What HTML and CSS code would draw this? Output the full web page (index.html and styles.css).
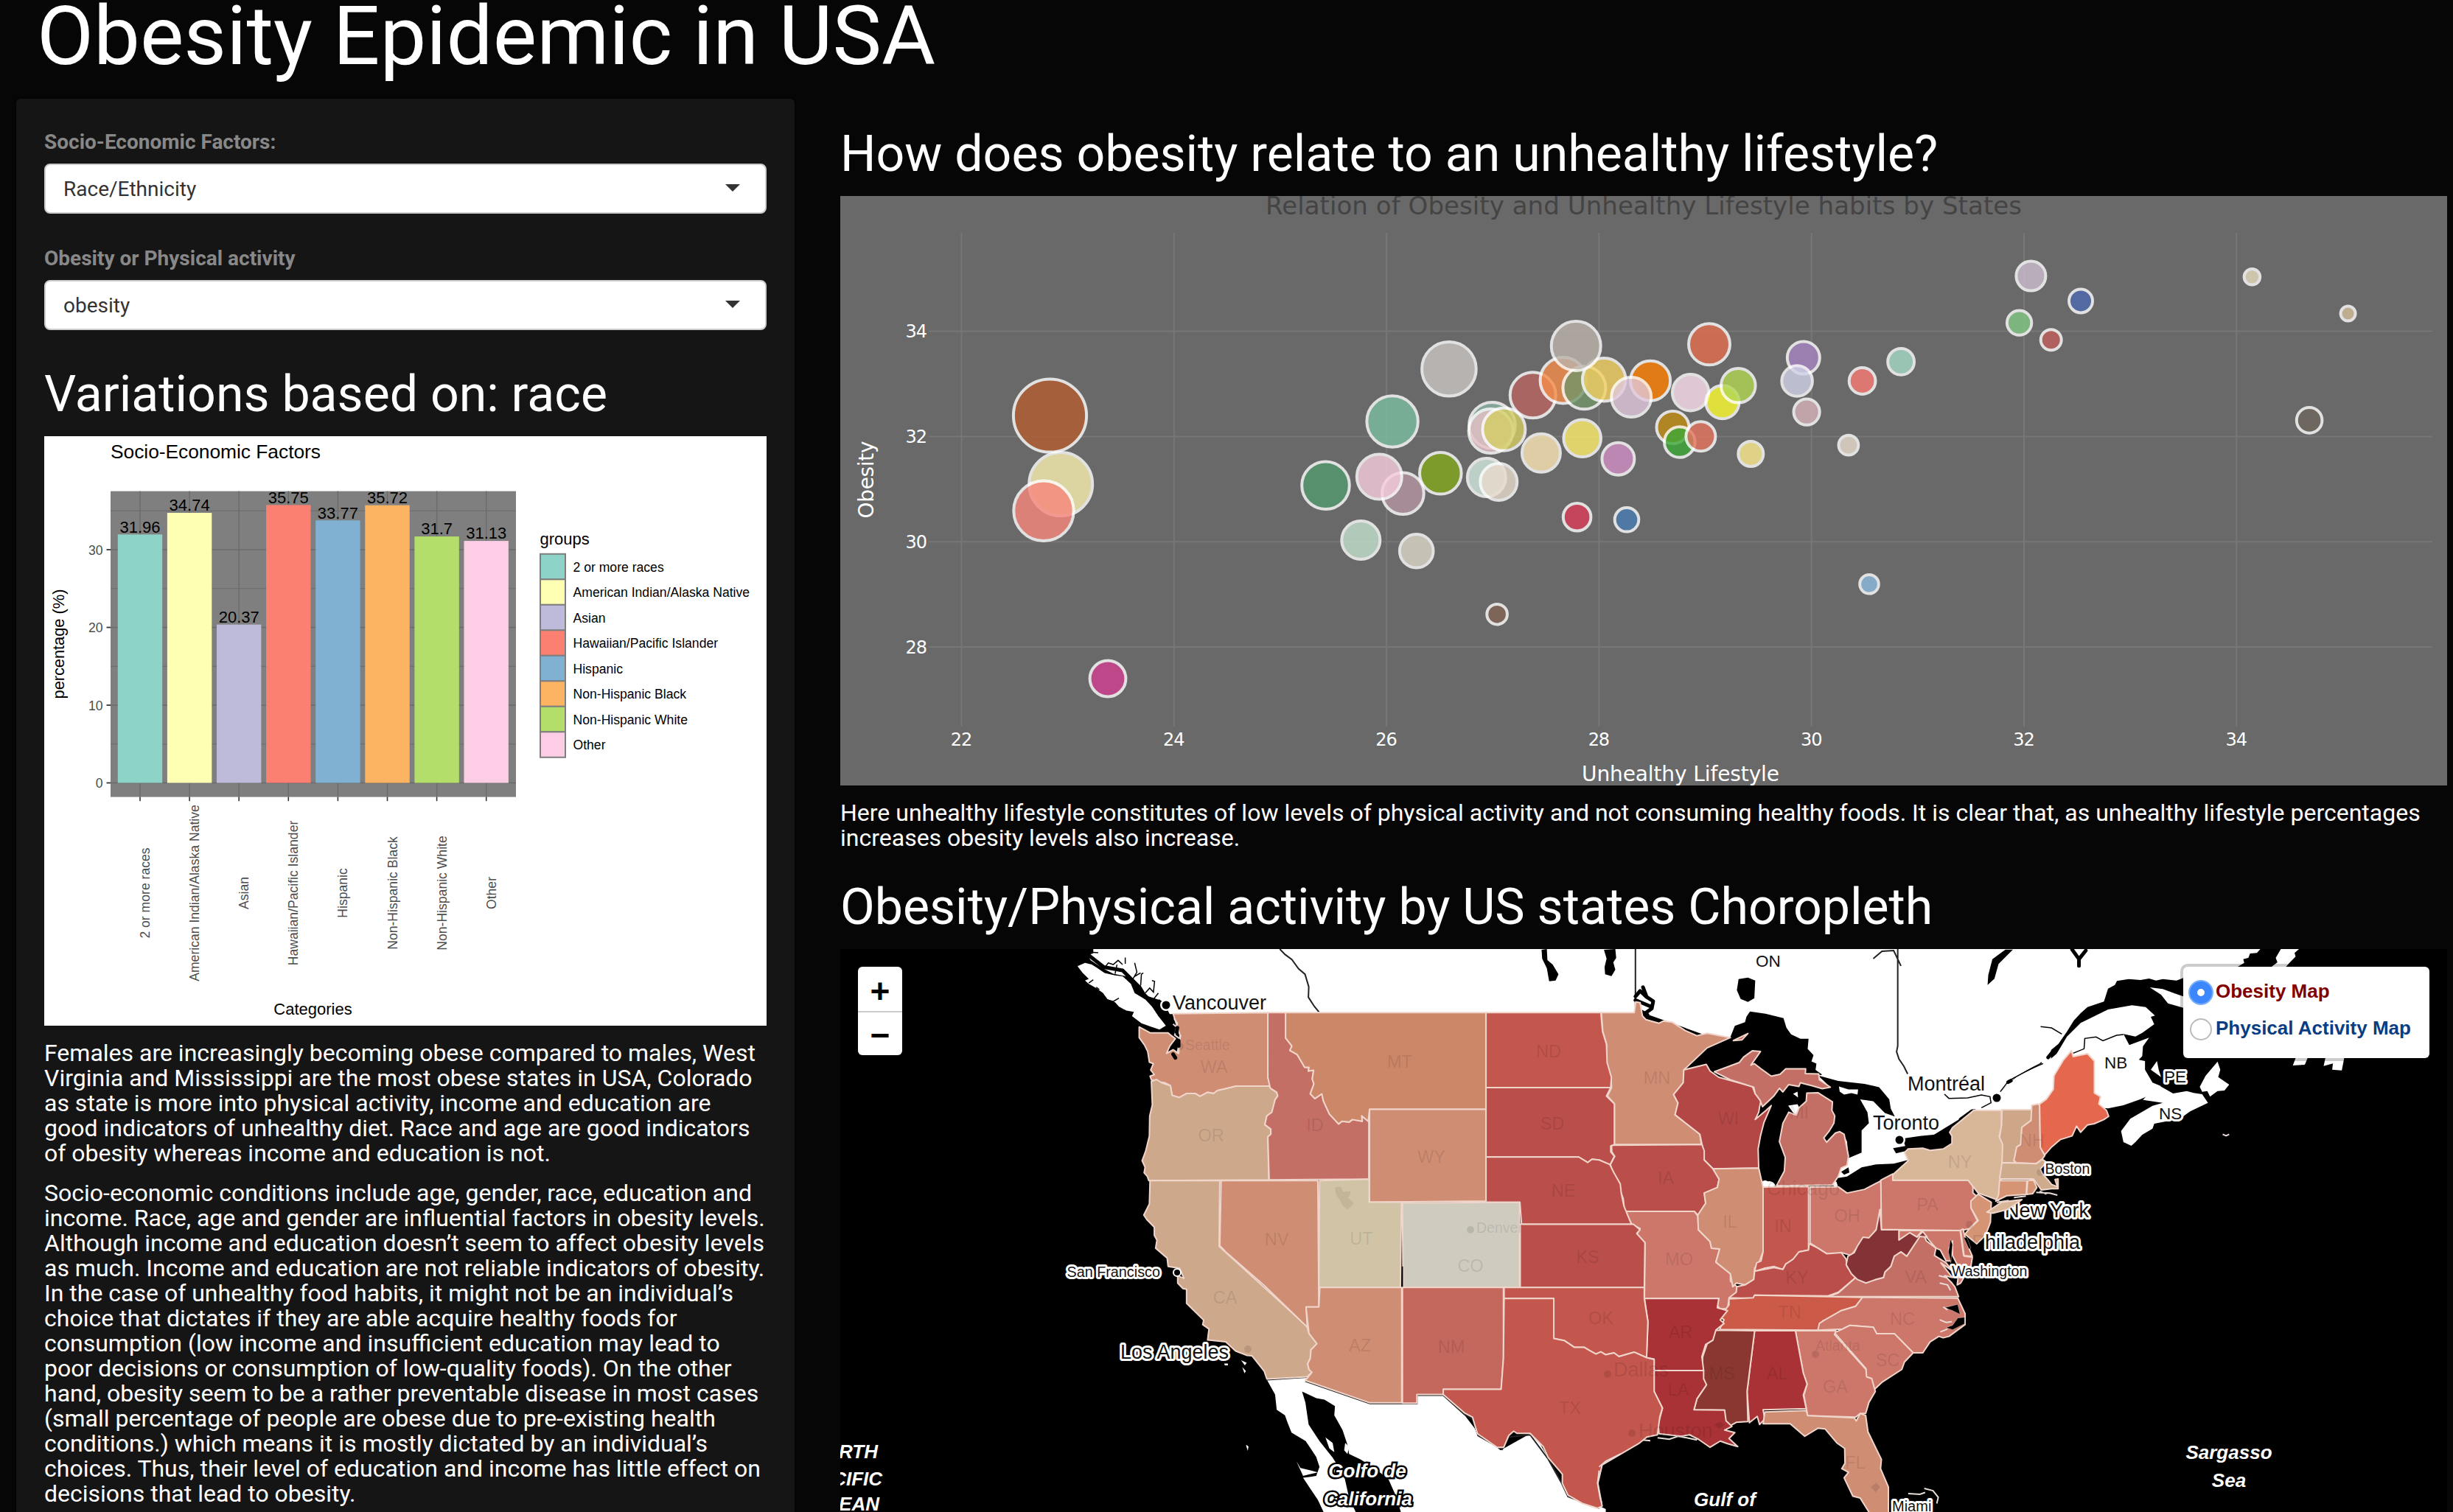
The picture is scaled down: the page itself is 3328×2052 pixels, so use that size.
FILE: index.html
```html
<!DOCTYPE html>
<html lang="en">
<head>
<meta charset="utf-8">
<title>Obesity Epidemic in USA</title>
<link rel="stylesheet" href="styles.css">
</head>
<body>
<h1 class="page-title">Obesity Epidemic in USA</h1>
<div class="layout">
  <aside class="sidebar">
    <div class="field">
      <label class="field-label">Socio-Economic Factors:</label>
      <div class="select"><span>Race/Ethnicity</span><i class="caret"></i></div>
    </div>
    <div class="field">
      <label class="field-label">Obesity or Physical activity</label>
      <div class="select"><span>obesity</span><i class="caret"></i></div>
    </div>
    <h3 class="heading">Variations based on: race</h3>
    <svg class="bar-chart" id="bars" viewBox="0 0 980 800"></svg>
    <p class="copy first">Females are increasingly becoming obese compared to males, West Virginia and Mississippi are the most obese states in USA, Colorado as state is more into physical activity, income and education are good indicators of unhealthy diet. Race and age are good indicators of obesity whereas income and education is not.</p>
    <p class="copy">Socio-economic conditions include age, gender, race, education and income. Race, age and gender are influential factors in obesity levels. Although income and education doesn’t seem to affect obesity levels as much. Income and education are not reliable indicators of obesity. In the case of unhealthy food habits, it might not be an individual’s choice that dictates if they are able acquire healthy foods for consumption (low income and insufficient education may lead to poor decisions or consumption of low-quality foods). On the other hand, obesity seem to be a rather preventable disease in most cases (small percentage of people are obese due to pre-existing health conditions.) which means it is mostly dictated by an individual’s choices. Thus, their level of education and income has little effect on decisions that lead to obesity.</p>
  </aside>
  <main class="main">
    <h3 class="heading">How does obesity relate to an unhealthy lifestyle?</h3>
    <svg class="scatter" id="scatter" viewBox="0 0 2180 800"></svg>
    <p class="copy wide">Here unhealthy lifestyle constitutes of low levels of physical activity and not consuming healthy foods. It is clear that, as unhealthy lifestyle percentages increases obesity levels also increase.</p>
    <h3 class="heading second">Obesity/Physical activity by US states Choropleth</h3>
    <div class="map">
      <svg class="map-canvas" id="map" viewBox="0 0 2180 800">
        <!-- Pacific side: Canada, Vancouver Island -->
        <g transform="matrix(.5102 0 0 .56888 -20 -128)">
          <path class="land" d="M712,225H1700V380H915L905,362 888,345 872,350 850,330 838,312 815,300 800,290 765,284 740,272 722,262 705,252 697,240 712,235Z"/>
          <path class="land" d="M670,266L690,258 708,262 722,270 742,282 770,288 790,290 812,308 822,330 850,345 868,362 885,385 905,408 888,417 862,409 840,402 815,385 820,375 800,372 780,362 770,352 750,345 738,330 720,318 700,308 690,300 700,296 684,282Z"/>
          <path class="inlet" d="M700,232L725,234M740,272L752,258 765,262 778,252 790,262M770,284L775,262M815,300L828,280 822,258M822,290L838,282M838,312L840,285 845,282M850,330L862,318 872,328 875,302 868,300M872,345L885,330M797,260V245M745,345L765,350 780,342M720,316L728,322M760,355L790,372M700,306L712,298"/>
          <path class="inlet wide" d="M700,240L740,268 790,276 830,312 850,340 890,352"/>
          <path class="inlet wide" d="M880,352L905,385 920,400 930,415"/>
          <path class="land" d="M1118,1408L1124,1412 1122,1420ZM1105,1206L1120,1212 1115,1218ZM1108,1222L1118,1232 1114,1237ZM1060,1214H1070V1218H1062Z"/>
          <path class="line" d="M1208,225L1222,238 1240,250 1258,272 1275,285 1285,315 1284,340 1300,362 1312,375M1492,225V380"/>
        </g>
        <!-- Mexico and western Canada borders -->
        <g transform="matrix(.44643 0 0 .49872 360 -18)">
          <path class="land" d="M490,1208L612,1198 803,1270 946,1270 946,1248 1040,1245 1130,1350 1200,1400 1300,1350 1400,1510 1520,1560V1640H700L645,1535 600,1475 640,1470 650,1445 640,1418 608,1375 565,1352 553,1325 545,1305 520,1290 515,1248Z"/>
          <path fill="#000" d="M597,1240L640,1258 665,1262 697,1280 695,1305 720,1345 735,1385 740,1410 775,1425 820,1450 860,1480 885,1530 920,1640H800L760,1568 740,1530 725,1470 690,1420 650,1375 617,1330 607,1270Z"/>
          <path class="land" d="M668,1365L690,1380 695,1405 680,1395ZM728,1380L740,1390 735,1410 725,1400ZM580,1430L592,1448 645,1460 600,1470ZM428,1385L434,1390 432,1402Z"/>
          <path class="line" d="M490,1208L612,1201M607,1212L803,1273H946V1250H1026M1026,1250L1090,1302 1115,1316 1132,1360 1205,1398 1225,1364 1290,1358 1345,1424 1386,1490 1405,1526 1500,1558"/>
          <path class="line" d="M853,36V209M1282,36L1294,209"/>
        </g>
        <!-- Eastern Canada and the Great Lakes -->
        <g transform="matrix(.39541 0 0 .49872 1010 -18)">
          <path class="land" d="M-700,36H1600V475H1335L1160,560 1108,612 1000,640 870,670 850,640 800,380 198,209H-700Z"/>
          <path class="line" d="M174,36V209M1074,36V300L1070,315 1078,335 1095,355 1108,376M1235,430L1245,443 1290,445 1330,434 1370,436 1395,450 1360,470M1568,345L1530,362 1490,380 1455,398 1430,420 1420,438M990,62L1020,42 1060,40 1085,82"/>
          <path fill="#000" d="M66,38L105,36 108,60 98,72 105,92 92,110 70,105 68,85 75,62ZM-148,38L-130,36-128,66-110,78-90,105-100,122-122,124-130,88-146,62ZM528,118L560,114 585,122 582,170 560,180 535,172 522,148ZM1398,68L1440,36 1468,44 1400,100 1400,124 1376,134 1388,112 1386,86Z"/>
          <path class="inlet wide" d="M174,165L190,150 210,165 235,178 230,198 205,212M200,140L212,165M174,175L225,192M180,200L215,215"/>
          <path fill="#000" d="M350,365L420,305 500,275 515,245 550,235 555,220 567,206 620,212 682,224 692,250 708,268 740,280 768,280 765,308 785,325 778,342 795,348 792,365 815,378 757,385 758,362 690,362 665,378 640,382 600,360 570,350 600,315 560,320 530,345 460,370 420,350Z"/>
          <path fill="#000" d="M800,380L870,395 960,403 1010,412 1045,445 1050,470 1064,492 1030,482 1005,462 990,450 945,445 970,480 975,510 950,530 950,590 905,605 900,560 885,537 860,535 830,562 820,545 850,500 850,452 800,427 765,415 843,412Z"/>
          <path class="land" d="M872,410L905,418 938,418 936,432 915,428 890,432 875,424Z"/>
          <path fill="#000" d="M593,580L605,520 622,500 640,465 585,502 605,462 630,440 650,432 680,418 770,408 765,440 750,455 725,485 680,510 668,560 688,603 685,640 658,680 612,686 597,655Z"/>
          <path class="land" d="M698,462L730,458 738,470 725,490 712,478ZM715,430L730,424 732,440ZM600,675A22,20 0 0 1 628,668 26,22 0 0 1 655,680L640,684H605ZM850,678L860,668 878,672 884,690 860,684Z"/>
          <path fill="#000" d="M860,660L900,655 950,630 1000,622 1060,620 1110,610 1057,652 1016,667 960,692 900,702 870,685ZM880,642L905,630 908,644 890,650Z"/>
          <path fill="#000" d="M1058,578L1100,572 1090,552 1150,545 1215,540 1240,522 1275,518 1335,473 1265,525 1262,570 1230,582 1160,584 1100,586 1068,592Z"/>
          <path class="inlet wide" d="M1335,474L1290,500"/>
          <!-- states -->
          <g class="states">
            <path fill="#cf8d74" d="M57,209L170,209 175,180 190,182 198,218 210,228 255,238 270,232 300,235 345,258 385,272 420,265 500,277 420,305 340,365 338,400 305,432 320,455 310,487 395,540 400,568 102,568V457L78,436 92,413 90,385 75,345V295L62,260Z"/>
            <path fill="#b34746" d="M340,365L417,350 430,368 460,385 575,410 585,430 607,440 600,466 597,480 585,500 622,475 640,462 615,508 603,545 595,580 597,632 440,634 410,610 407,585 395,540 310,487 320,455 305,432 338,400Z"/>
            <path fill="#c46f66" d="M445,370L530,345 545,330 575,313 603,315 570,352 582,348 605,362 640,382 670,377 690,362 758,362 757,375 803,376 805,392 843,412 815,416 780,408 740,400 735,410 700,405 680,425 668,415 650,435 630,450 610,465 602,448 585,430 580,412 500,392ZM510,285L560,266 540,283Z"/>
            <path fill="#c46f66" d="M658,680L685,640 688,603 668,560 680,510 700,480 725,488 735,468 760,450 762,428 800,427 850,452 848,475 858,490 855,510 840,530 820,550 830,562 860,537 875,533 890,540 905,600 900,625 880,632 870,655 850,678Z"/>
            <path fill="#b94e4a" d="M92,570L402,568 410,585 410,610 440,634 461,662 455,685 410,700 415,728 388,760 376,750H137L132,715 125,700 120,675 95,640 88,622 103,600 93,588Z"/>
            <path fill="#cd776b" d="M137,750H376L388,762 390,800 430,832 435,850 463,852 450,888 500,920 500,940 522,955 520,970 495,988 490,1015 463,1015 455,1005 460,987H205L207,835 178,813 190,797 160,783Z"/>
            <path fill="#cf8d74" d="M440,634L597,632 612,684V860L600,885 583,905 580,935 550,950 520,945 508,955 500,920 450,888 463,852 435,850 430,832 390,800 388,760 415,728 410,700 455,685 461,662Z"/>
            <path fill="#c3564d" d="M612,684L768,682V855L735,860 732,878 715,880 700,898 690,893 680,908 650,900 615,905 583,913 590,890 605,885 612,860Z"/>
            <path fill="#cd776b" d="M773,684L850,683 870,683 900,700 960,690 1016,667 1018,745 1010,778 1000,800 970,830 955,822 940,850 930,853 915,870 880,862 870,866 830,865 800,850 773,836Z"/>
            <path fill="#cd776b" d="M1016,665L1057,648V665H1315L1332,680V700L1350,712 1325,740 1347,775 1320,797 1290,802 1018,799Z"/>
            <path fill="#d7b797" d="M1057,650L1110,612 1097,590 1110,580 1160,578 1185,584 1230,580 1260,565V545L1252,535 1262,522 1335,475H1430V520L1422,545 1437,572 1432,640 1420,720 1393,712 1350,700 1315,665H1057Z"/>
            <path fill="#d59474" d="M1350,703L1395,725 1392,780 1375,815 1345,838 1305,812 1320,797 1350,775 1325,740 1325,722Z"/>
            <path fill="#b94e4a" d="M495,985L520,970 522,955 550,950 580,935 583,913 650,903 680,908 690,893 715,880 735,860 768,855 770,838 800,850 830,865 880,862 897,880 900,900 930,930 870,970 835,980 583,978 578,987Z"/>
            <path fill="#cd776b" d="M1078,802H1290L1302,872 1330,875 1325,900 1300,910 1285,905 1275,890 1262,870 1262,830 1250,850 1255,885 1240,885 1220,855 1205,850 1172,820 1155,805 1140,820 1115,810 1078,828ZM1288,802L1298,798 1310,835 1330,872 1300,870ZM1285,905L1322,902 1290,945 1278,950Z"/>
            <path fill="#c46f66" d="M835,982L870,972 930,930 965,942 1000,935 1025,930 1030,915 1050,900 1062,870 1085,860 1105,870 1130,840 1140,820 1160,808 1172,830 1205,850 1200,870 1240,890 1262,912 1222,890 1262,930 1235,925 1260,945 1270,955 1283,982Z"/>
            <path fill="#833235" d="M1013,745L1018,800H1078V828L1115,808 1140,820 1160,805 1175,820 1150,818 1130,842 1105,872 1085,860 1062,872 1050,900 1030,915 1025,930 1000,935 965,945 935,935 915,920 897,895 903,872 925,862 935,845 955,820 975,822 1000,800Z"/>
            <path fill="#cc5a48" d="M495,988L578,985 583,978 835,982 953,984 930,1008 880,1020 830,1045 818,1047 800,1073 463,1071 478,1045 465,1038 485,1015 495,1005Z"/>
            <path fill="#cd776b" d="M953,984L1280,986 1305,1028V1058L1250,1090 1230,1094 1215,1090 1185,1105 1160,1135H1127L1063,1083H1002L990,1065 910,1060 885,1070 800,1073 805,1055 820,1047 880,1020 930,1008Z"/>
            <path fill="#cd776b" d="M857,1080L885,1070 910,1060 990,1065 1002,1083H1063L1127,1135 1097,1160 1088,1180 1020,1215 993,1235 983,1205 965,1200 965,1178Z"/>
            <path fill="#cd776b" d="M723,1075H862L857,1085 965,1180 967,1200 985,1205 997,1240 975,1270 964,1300 945,1300 930,1310 765,1306 752,1250 763,1220 750,1190Z"/>
            <path fill="#a83236" d="M583,1075H723L750,1190 763,1220 750,1250 760,1287 612,1290 618,1315 600,1330 592,1308 565,1325 557,1240Z"/>
            <path fill="#8a3731" d="M450,1073L583,1075 557,1240 560,1322 520,1324 495,1335 482,1320 480,1291 375,1290 385,1260 415,1225 400,1195 405,1145 420,1110 440,1100 440,1080Z"/>
            <path fill="#a83236" d="M205,987H460L455,1012 490,1020 465,1045 478,1055 450,1073 440,1100 415,1112 402,1145 408,1183H238V1152L212,1148 217,1050Z"/>
            <path fill="#a83236" d="M238,1183H408V1205L418,1222 385,1260 375,1290 480,1291 485,1320 505,1335 480,1345 515,1352 495,1368 525,1390 490,1382 465,1375 430,1392 390,1370 360,1358 330,1362 255,1355 252,1330 267,1285 238,1240Z"/>
            <path fill="#cf8d74" d="M618,1296L760,1292 765,1306 925,1312 932,1320 945,1300 964,1305 972,1350 1018,1425 1015,1450 1042,1500V1568L1035,1640 975,1568 945,1530 920,1525 890,1475 905,1460 882,1450 893,1435 892,1395 865,1380 825,1342 800,1340 755,1362 705,1328H612Z"/>
          </g>
          <path fill="#000" stroke="#eccfc9" stroke-width="1" d="M1235,1012L1280,1003 1288,1030 1262,1020ZM1240,1066L1262,1060 1280,1040 1303,1038V1056L1262,1072ZM1255,825L1262,840 1256,890 1248,860ZM1300,820L1312,822 1325,850 1318,852Z"/>
          <path class="halo-line" d="M1218,1045L1240,1052 1260,1050M1220,1078L1245,1070M1230,1010L1245,1018M1218,945L1245,950 1255,965M1215,925L1240,930"/>
          <path class="halo-line" d="M1110,1518L1150,1520 1168,1515M1165,1504L1195,1510 1213,1528 1208,1545"/>
          <path class="halo-line" d="M190,1360L200,1372 225,1374M250,1366L290,1370 320,1362 350,1366 385,1372"/>
          <path fill="#0000001a" d="M445,1330L465,1322 480,1332 460,1342ZM982,1500L1000,1488 1013,1500 998,1515Z"/>
        </g>
        <!-- New England, Maritimes -->
        <g transform="matrix(.46429 0 0 .33333 1460 -18)">
          <path class="land" d="M0,54H1005L995,70 975,72 970,90 955,95 958,110 940,125 780,172 760,182 720,176 700,182 680,174 655,180 620,176 586,184 580,200 560,215 548,268 500,290 480,315 460,345 440,390 415,440 385,475 360,520 300,560 250,630 200,706H0Z"/>
          <path class="land" d="M150,706L250,630 300,565 370,528 410,480 440,410 480,355 560,300 630,283 670,290 697,325 685,330 695,360 660,395 640,410 605,400 622,445 680,415 662,450 660,490 650,505 668,510 668,545 690,598 715,612 680,650 655,665 605,690 560,703 535,700 530,708Z"/>
          <path class="land" d="M662,668L690,625 712,612 735,630 750,642 790,632 810,640 835,645 852,680 800,715 770,745 695,765 690,785 660,810 640,840 628,855 605,840 598,795 625,745 690,692 720,680ZM880,512L888,545 882,575 914,606 900,630 880,632 858,655 850,632 835,635 828,615 845,570ZM703,510L708,545 715,575 700,560 685,545ZM682,210L720,217 755,235 780,247V293L735,275 715,240ZM1065,54H1118L1105,70 1108,85 1090,110 1080,126H1038L1055,108 1050,90ZM1108,498H1143L1135,525 1100,528ZM1195,498H1250L1247,520 1243,548 1215,545 1217,520 1190,530Z"/>
          <path class="inlet" d="M363,370L395,375 425,400M458,478L490,460 492,418 525,412 545,427 585,405 605,402M82,645L95,662 150,660 190,648 215,655 218,680 190,700M245,635L270,590 330,545 370,520"/>
          <path class="inlet wide" d="M268,596L276,590M385,495L400,470M455,56L475,95 495,60M475,90V122"/>
          <path fill="#000" d="M210,160L222,95 260,56H282L240,115 228,175 208,200Z"/>
          <g class="states">
            <path fill="#cea688" d="M250,708H337L335,752 308,780 305,850 293,860 292,900 285,915 292,924H250L252,850 243,820 249,770Z"/>
            <path fill="#cf8d74" d="M337,690L355,685 360,690 362,860 375,895 367,910 350,928 292,924 285,915 293,860 305,850 308,780 335,752Z"/>
            <path fill="#e4674e" d="M453,468L458,492 500,480 520,510V640L538,655 533,685 555,710 562,735 548,748 520,765 500,770 480,800 468,775 455,815 420,830 395,860 375,892 362,862 360,685 380,665 400,625 402,570 430,505Z"/>
            <path fill="#ceab8d" d="M250,924L350,928 368,910 380,922 362,950 368,968 385,995 395,1012 412,1022 405,992 414,990V1030L395,1030 365,1035 342,990H243Z"/>
            <path fill="#d59474" d="M243,997H323L321,1053 265,1058 232,1080 240,1055Z"/>
            <path fill="#d59474" d="M325,997L342,995 352,1025 340,1050 322,1053Z"/>
          </g>
          <path class="halo-line" d="M350,1045L390,1048 412,1056M235,1085L270,1078M285,1066L320,1060M360,1040L380,1052M895,808L905,814 914,808"/>
        </g>
        <!-- Western and central states -->
        <g class="states" transform="matrix(.44643 0 0 .49872 360 -18)">
          <path fill="#cf8d74" d="M102,248L135,264H190L200,272 212,280 195,300 185,320 205,310 222,320 226,270 215,240 205,212 493,209V385L500,409H397L365,416 340,421 328,429 310,426 287,437 272,429H247L224,440 202,434 197,408 180,400 160,397 139,392 135,382 148,378 137,365 145,348 133,344 128,315 118,297 102,277Z"/>
          <path fill="#cea88a" d="M139,396L155,391 170,400 197,408 202,434 224,440 247,429H272L287,437 310,426 328,429 340,421 365,416 397,409H498L505,418 520,426 523,436 515,446 505,485 490,490 484,514 502,526V540L493,547 496,664 131,666 127,655 117,645 120,630 111,612 122,585 133,545 134,490 142,460Z"/>
          <path fill="#cea88a" d="M135,666H347L345,845 612,1063 618,1082 642,1110 624,1127 622,1150 614,1165 618,1180 627,1188 612,1200 490,1206 482,1185 445,1143 430,1142 395,1130 365,1105 310,1100 314,1070 295,1058 298,1046 246,1000V962L235,960 219,945 219,925 238,932 225,905 190,900 187,877 152,850 156,828 148,815V793L125,772 116,760 133,730Z"/>
          <path fill="#cf8d74" d="M351,666H645L648,1010H609L613,1065 480,950 365,860 347,843Z"/>
          <path fill="#c46f66" d="M493,209H547V278L566,300 560,312 582,323 605,358H618L616,368 632,366 628,390 633,403 622,430 636,443 657,430 662,450 680,485 708,512 718,505 740,507 750,500 780,505 778,490 800,505V662L497,664 493,547 502,540V526L484,514 490,490 505,480 515,446 523,436 520,426 500,414 493,385Z"/>
          <path fill="#cc8668" d="M547,209H1156V472H802L798,505 778,490 780,505 750,500 740,507 718,505 708,512 680,485 662,450 657,430 636,443 622,430 633,403 628,390 632,366 616,368 618,358H605L582,323 560,312 566,300 547,278Z"/>
          <path fill="#cf8d74" d="M802,472H1156V722L802,725Z"/>
          <path fill="#d1c4a6" d="M650,666L801,662V725H899L896,957H648Z"/>
          <path fill="#cfcbbf" d="M902,727L1258,725V957H904Z"/>
          <path fill="#cf8d74" d="M651,957H900V1271H803L607,1210 627,1188 618,1180 614,1165 622,1150 624,1127 642,1110 618,1082 609,1010H648Z"/>
          <path fill="#c4675c" d="M902,957H1209V1150L1202,1234H1026V1248H946V1272H902Z"/>
          <path fill="#c3564d" d="M1156,209H1505L1510,260 1522,295 1524,345 1537,385 1535,413H1156Z"/>
          <path fill="#b94e4a" d="M1156,413H1535L1522,436 1546,457V568L1535,572V588L1546,600 1532,625 1500,610 1478,608 1465,617 1438,602H1156Z"/>
          <path fill="#b94e4a" d="M1156,602H1438L1465,617 1478,608 1500,610 1532,622 1545,645 1564,675 1567,700 1575,735 1598,785H1264L1259,725H1156Z"/>
          <path fill="#b94e4a" d="M1260,785H1604L1624,800 1614,810 1639,835 1637,958H1260Z"/>
          <path fill="#c3564d" d="M1211,957H1637V987L1648,1050 1644,1148 1607,1133 1560,1145 1545,1135 1520,1140 1505,1132 1490,1138 1470,1128 1455,1120 1425,1120 1395,1102 1362,1096V987H1211Z"/>
          <path fill="#c3564d" d="M1211,987H1362V1096L1395,1102 1425,1120 1455,1120 1470,1128 1490,1138 1505,1132 1520,1140 1545,1135 1560,1145 1607,1133 1644,1148 1667,1153V1240L1692,1285 1684,1310 1677,1358 1645,1364 1620,1382 1509,1440 1496,1490 1509,1552 1495,1558 1450,1545 1405,1522 1388,1490V1465L1345,1420 1330,1390 1290,1354H1250L1240,1348 1225,1360 1210,1392H1190L1130,1355 1115,1310 1090,1298 1026,1248V1234H1202L1209,1150Z"/>
        </g>
        <g transform="matrix(.44643 0 0 .49872 360 -18)">
          <path fill="#c3b598" d="M697,685L715,683 722,697 745,695 742,708 735,712 755,728 735,745 720,735 712,718 700,705Z"/>
          <path class="halo-line" d="M205,240L218,250 210,270 225,280 218,320M208,225L218,238 212,262M228,270L222,300M1500,1455L1495,1490 1503,1530 1508,1545M1500,1445L1520,1430 1565,1410"/>
          <path class="inlet wide" d="M205,322L212,332M222,285V300M218,250L216,262M208,912L215,918"/>
          <path class="inlet" d="M902,900V955"/>
        </g>
        <g id="labels"></g>
        <!-- Long Island lies over the New York label -->
        <g class="states" transform="matrix(.39541 0 0 .49872 1010 -18)">
          <path fill="#d7b797" d="M1380,752L1430,725 1500,718 1450,745 1400,755Z"/>
        </g>
      </svg>
      <div class="zoom-control"><span>+</span><span>−</span></div>
      <div class="layer-control">
        <div class="layer obesity"><i class="radio on"></i>Obesity Map</div>
        <div class="layer activity"><i class="radio"></i>Physical Activity Map</div>
      </div>
    </div>
  </main>
</div>
<script src="charts.js"></script>
</body>
</html>
```
FILE: styles.css
```css
* { box-sizing: border-box; }
html { overflow: hidden; }
body {
  margin: 0;
  height: 2052px;
  overflow: hidden;
  background: #060606;
  color: #fff;
  font-family: Roboto, "Liberation Sans", sans-serif;
}
.page-title {
  margin: 0;
  padding-left: 50px;
  height: 132px;
  font-size: 112px;
  line-height: 98px;
  font-weight: 400;
  white-space: nowrap;
}
.layout {
  display: grid;
  grid-template-columns: 1060px 2180px;
  column-gap: 60px;
  padding-left: 20px;
}
.sidebar {
  height: 2000px;
  padding: 44px 38px 0;
  background: #151515;
  border: 2px solid #040404;
  border-radius: 8px;
}
.field { height: 158px; }
.field-label {
  display: block;
  height: 44px;
  line-height: 30px;
  font-size: 28px;
  font-weight: 700;
  color: #888;
}
.select {
  display: flex;
  align-items: center;
  justify-content: space-between;
  height: 68px;
  padding: 0 34px 0 24px;
  border: 2px solid #ccc;
  border-radius: 8px;
  background: #fff;
  color: #333;
  font-size: 28px;
}
.caret {
  margin-bottom: 2px;
  border: 10px solid transparent;
  border-top-color: #333;
  border-bottom: 0;
}
.heading {
  margin: 0;
  font-size: 68px;
  line-height: 74px;
  font-weight: 400;
  white-space: nowrap;
}
.sidebar .heading { height: 98px; padding-top: 4px; }
.bar-chart { display: block; width: 980px; height: 800px; background: #fff; }
.copy {
  margin: 20px 0 0;
  font-size: 32px;
  line-height: 34px;
}
.sidebar .copy { width: 980px; }
.main { padding-top: 40px; }
.main .heading { height: 94px; }
.scatter { display: block; width: 2180px; height: 800px; background: #696969; }
.main .heading.second { height: 94px; margin-top: 40px; }
.map {
  position: relative;
  width: 2180px;
  height: 800px;
  background: #000;
  overflow: hidden;
}
.map-canvas { display: block; width: 2180px; height: 800px; }
.land { fill: #fff; }
.line { fill: none; stroke: #222; stroke-width: 2; vector-effect: non-scaling-stroke; }
.inlet { fill: none; stroke: #000; stroke-width: 1.5; vector-effect: non-scaling-stroke; }
.inlet.wide { stroke-width: 5; stroke-linecap: round; stroke-linejoin: round; }
.halo-line { fill: none; stroke: #e8dcd8; stroke-width: 2; vector-effect: non-scaling-stroke; }
.states path {
  stroke: #f0d5cb;
  stroke-width: 2;
  stroke-linejoin: round;
  vector-effect: non-scaling-stroke;
}
svg text { font-family: "Liberation Sans", Arial, sans-serif; }
.scatter text { font-family: "DejaVu Sans", Verdana, sans-serif; fill: #fff; }
.scatter .plot-title { fill: #444; }
.faint { fill: #000; fill-opacity: .1; }
.city { fill: #111; stroke: #fff; stroke-width: 6px; paint-order: stroke; stroke-linejoin: round; }
.sea { fill: #fff; stroke: #000; stroke-width: 5px; paint-order: stroke; font-weight: 700; font-style: italic; }
.zoom-control {
  position: absolute;
  left: 24px;
  top: 24px;
  width: 60px;
  height: 120px;
  border-radius: 6px;
  background: #fff;
  color: #000;
  font: 700 46px/66px "Liberation Sans", sans-serif;
  text-align: center;
}
.zoom-control span { display: block; height: 60px; }
.zoom-control span + span { border-top: 2px solid #ccc; line-height: 62px; }
.layer-control {
  position: absolute;
  right: 20px;
  top: 20px;
  width: 342px;
  height: 132px;
  padding: 17px 9px;
  border: 4px solid rgba(0, 0, 0, .2);
  border-radius: 10px;
  background: #fff;
  background-clip: padding-box;
  font: 700 26px/46px "Liberation Sans", sans-serif;
}
.layer { display: flex; align-items: center; gap: 5px; height: 46px; white-space: nowrap; }
.layer.obesity { color: #800000; margin-top: -7px; }
.layer.activity { color: #0a3d82; margin-top: 4px; }
.radio {
  width: 30px;
  height: 30px;
  margin-top: 3px;
  border: 2px solid #bbb;
  border-radius: 50%;
  background: #fff;
}
.radio.on { border: 10px solid #3b87fb; box-shadow: 0 0 0 2px #79aefa; }
```
FILE: charts.js
```js
const text = (s, x, y, size, attrs = '') =>
  `<text x="${x}" y="${y}" font-size="${size}" ${attrs}>${s}</text>`;

/* Bar chart */
(() => {
  const groups = [
    ['2 or more races', 31.96, '#8dd3c7'], ['American Indian/Alaska Native', 34.74, '#ffffb3'],
    ['Asian', 20.37, '#bebada'], ['Hawaiian/Pacific Islander', 35.75, '#fb8072'],
    ['Hispanic', 33.77, '#80b1d3'], ['Non-Hispanic Black', 35.72, '#fdb462'],
    ['Non-Hispanic White', 31.7, '#b3de69'], ['Other', 31.13, '#fccde5'],
  ];
  const y = v => 470.5 - v * 10.55;
  const mid = i => 130 + i * 67.1;
  let s = '<rect x="90" y="74.6" width="550" height="415" fill="#7f7f7f"/>';
  for (let v = 0; v <= 35; v += 5)
    s += `<path d="M90 ${y(v)}H640" stroke="#6b6b6b" stroke-width="${v % 10 ? 1 : 1.6}"/>`;
  groups.forEach((g, i) => { s += `<path d="M${mid(i)} 74.6V489.6" stroke="#6b6b6b" stroke-width="1.4"/>`; });
  groups.forEach(([name, v, c], i) => {
    const x = mid(i);
    s += `<rect x="${x - 30.2}" y="${y(v)}" width="60.4" height="${v * 10.55}" fill="${c}"/>`;
    s += text(v, x, y(v) - 2.6, 22, 'text-anchor="middle"');
    s += `<path d="M${x} 489.6v5.6" stroke="#333" stroke-width="1.6"/>`;
    s += `<text transform="translate(${x + 13} 620) rotate(-90)" font-size="17.6" fill="#4d4d4d" text-anchor="middle">${name}</text>`;
    const ky = 159.8 + i * 34.5;
    s += `<rect x="673" y="${ky}" width="34" height="34.5" fill="${c}" stroke="#7f7f7f" stroke-width="2"/>`;
    s += text(name, 717.5, ky + 23.8, 17.6);
  });
  [0, 10, 20, 30].forEach(v => {
    s += `<path d="M84.5 ${y(v)}H90" stroke="#333" stroke-width="1.8"/>`;
    s += text(v, 79.5, y(v) + 6.5, 17.6, 'text-anchor="end" fill="#4d4d4d"');
  });
  s += text('Socio-Economic Factors', 90, 30, 26.4, 'textLength="285"');
  s += text('Categories', 364.5, 784.5, 22, 'text-anchor="middle"');
  s += text('groups', 672.5, 146.5, 22);
  s += '<text transform="translate(27 282) rotate(-90)" font-size="22" text-anchor="middle" textLength="149">percentage (%)</text>';
  document.getElementById('bars').innerHTML = s;
})();

/* Scatter plot: x, y, outer radius, colour as it appears over the plot background */
(() => {
  const states = [
    [658.5,392.7,34.3,'57906d'],[763.4,403.7,30.3,'a68c97'],[731.3,381,32.5,'dbb9c7'],[749.1,306,36.7,'77ad95'],
    [825.9,234.7,38.8,'b7b3b0'],[814.3,376.3,30.3,'7c9b2b'],[876.8,382,28,'bed0c8'],[893.3,388,27,'cfc4b8'],
    [706.3,467,28,'b1cab9'],[781.7,481.7,24.8,'c6c1b5'],[891.1,567.7,15.8,'7d6659'],[884.4,311.3,33.3,'86a69a'],
    [882.6,319,32,'cdb0b4'],[900.4,316.7,31,'bfba66'],[950.9,348.7,28,'dfcea6'],[1006.7,328.7,27.3,'e0d36c'],
    [939.7,270.3,33,'a96662'],[980.8,250.3,33.2,'da8650'],[1009.4,260.3,31,'708c6a'],[1036.2,249.3,31.3,'d8bc64'],
    [998.2,203.5,35.5,'aba59d'],[1099.1,250.7,29,'e07b16'],[1073.2,273,29,'c9b6c6'],[1179,201.3,30,'cb6d53'],
    [1153.6,266.7,26.7,'dfc8d4'],[1196.9,279.7,24.5,'dfe03b'],[1218.3,257.3,25.3,'a4c258'],[1129.5,314,24,'b08525'],
    [1138.8,334,22.8,'469c41'],[1167.4,326.3,22,'ce7262'],[1055.4,356.7,24,'bd87b3'],[1235.3,350,19,'dfd186'],
    [999.6,435.7,20.8,'c5465c'],[1067,439.3,18.3,'5078a5'],[1306.8,219.5,24,'9b7fb0'],[1298.1,251,22.8,'bebed0'],
    [1311.1,293.1,19.6,'c2a4a9'],[1386.6,251,19.9,'dc7872'],[1439.1,224.9,19.9,'9ac3b3'],[1615.4,108.6,22,'baadbc'],
    [1683,142.4,18,'5369a1'],[1599.6,172.1,18.7,'7cb57d'],[1642.7,195.2,16,'b26060'],[1915.4,109.8,12.8,'cfc6ae'],
    [2045.6,159.6,12,'bfae90'],[1993.1,304.4,19.3,'6d675f'],[1367.9,338.2,15.4,'cfc6ba'],[1396,526.8,14.8,'85abc9'],
    [284.5,298,51.6,'a5603b'],[299.2,391.1,45,'dcd6a2'],[276,427.3,42.7,'db8178'],[363,655,26.4,'bd4788'],
  ];
  const alpha = 0.8, back = 105;
  const solid = hex => 'rgb(' + hex.match(/../g).map(h =>
    Math.max(0, Math.min(255, Math.round((parseInt(h, 16) - back * (1 - alpha)) / alpha)))).join() + ')';
  let s = '';
  for (let i = 0; i < 7; i++) {
    const x = 164.5 + i * 288.3;
    s += `<path d="M${x} 50V720" stroke="#777" stroke-width="2"/>` + text(22 + 2 * i, x, 746, 24, 'text-anchor="middle" textLength="29.5"');
  }
  for (let i = 0; i < 4; i++) {
    const y = 183.6 + i * 142.8;
    s += `<path d="M120 ${y}H2160" stroke="#777" stroke-width="2"/>` + text(34 - 2 * i, 118, y + 8.6, 24, 'text-anchor="end" textLength="29.5"');
  }
  states.forEach(([x, y, r, c]) => {
    s += `<circle cx="${x}" cy="${y}" r="${r - 2}" fill="${solid(c)}" stroke="#fff" stroke-width="4" opacity="${alpha}"/>`;
  });
  s += text('Relation of Obesity and Unhealthy Lifestyle habits by States', 577, 24.5, 34, 'class="plot-title" textLength="1026"');
  s += text('Unhealthy Lifestyle', 1006, 793.5, 28, 'textLength="268"');
  s += '<text transform="translate(44.5 437.5) rotate(-90)" font-size="28" textLength="105">Obesity</text>';
  document.getElementById('scatter').innerHTML = s;
})();

/* Map labels */
(() => {
  const codes = [
    ['WA',507,168],['OR',503,261],['CA',522,481],['NV',592,402],['ID',644,247],['MT',759,161],['WY',802,290],
    ['UT',707,401],['CO',855,438],['AZ',705,546],['NM',829,548],['ND',961,147],['SD',966,245],['NE',981,336],
    ['KS',1014,426],['OK',1032,509],['TX',990,631],['MN',1108,183],['WI',1205,238],['MI',1301,230],['IA',1120,319],
    ['IL',1207,378],['IN',1279,384],['OH',1366,370],['PA',1475,355],['NY',1519,297],['MO',1138,429],['KY',1298,454],
    ['VA',1459,453],['TN',1288,501],['NC',1441,510],['SC',1421,566],['GA',1350,602],['AR',1140,528],['MS',1196,584],
    ['AL',1271,584],['LA',1137,606],['FL',1377,705],['NH',1617,268],
  ];
  const dim = [['Seattle',468,137,19.5],['Denver',863,385,19.5],['Atlanta',1323,545,19.5],['Dallas',1049,580,27],
    ['Houston',1083,663,27],['Chicago',1257,334,27]];
  const cities = [['Vancouver',451,82,27],['Montréal',1448,192,27],['Toronto',1401,245,27],
    ['San Francisco',307.5,445,19.8],['Los Angeles',380,556,27],['Boston',1634.6,305,19.5],
    ['New York',1580,364,27],['hiladelphia',1553,407,27],['Washington',1508,444,19.5],['Miami',1427,763,20],
    ['ON',1242,24,22.5],['NB',1715,162,22.5],['PE',1796,181,22.5],['NS',1789,231,22.5]];
  const seas = [['NORTH',5,691],['PACIFIC',6,728],['OCEAN',6,762],['Golfo de',715,717],
    ['California',716,755],['Gulf of',1200,756],['Sargasso',1884,692],['Sea',1884,730]];
  let s = '';
  [[442,76],[1569,202],[1437,259]].forEach(([x, y]) => {
    s += `<circle cx="${x}" cy="${y}" r="5.5" stroke="#fff" stroke-width="5" paint-order="stroke"/>`;
  });
  s += '<circle cx="457" cy="439" r="4" stroke="#fff" stroke-width="4" paint-order="stroke"/>';
  [[553,543],[855,381],[1041,577],[1074,657],[1323,550],[461,132],[1532,374],[1628,303]].forEach(([x, y]) => {
    s += `<circle class="faint" cx="${x}" cy="${y}" r="5"/>`;
  });
  codes.forEach(([n, x, y]) => { s += text(n, x, y, 23.5, 'class="faint" text-anchor="middle"'); });
  dim.forEach(([n, x, y, z]) => { s += text(n, x, y, z, 'class="faint"'); });
  cities.forEach(([n, x, y, z]) => { s += text(n, x, y, z, 'class="city"'); });
  s += text('P', 1535, 407, 27, 'class="faint"');
  seas.forEach(([n, x, y]) => { s += text(n, x, y, 26, 'class="sea" text-anchor="middle"'); });
  document.getElementById('labels').innerHTML = s;
})();
```
